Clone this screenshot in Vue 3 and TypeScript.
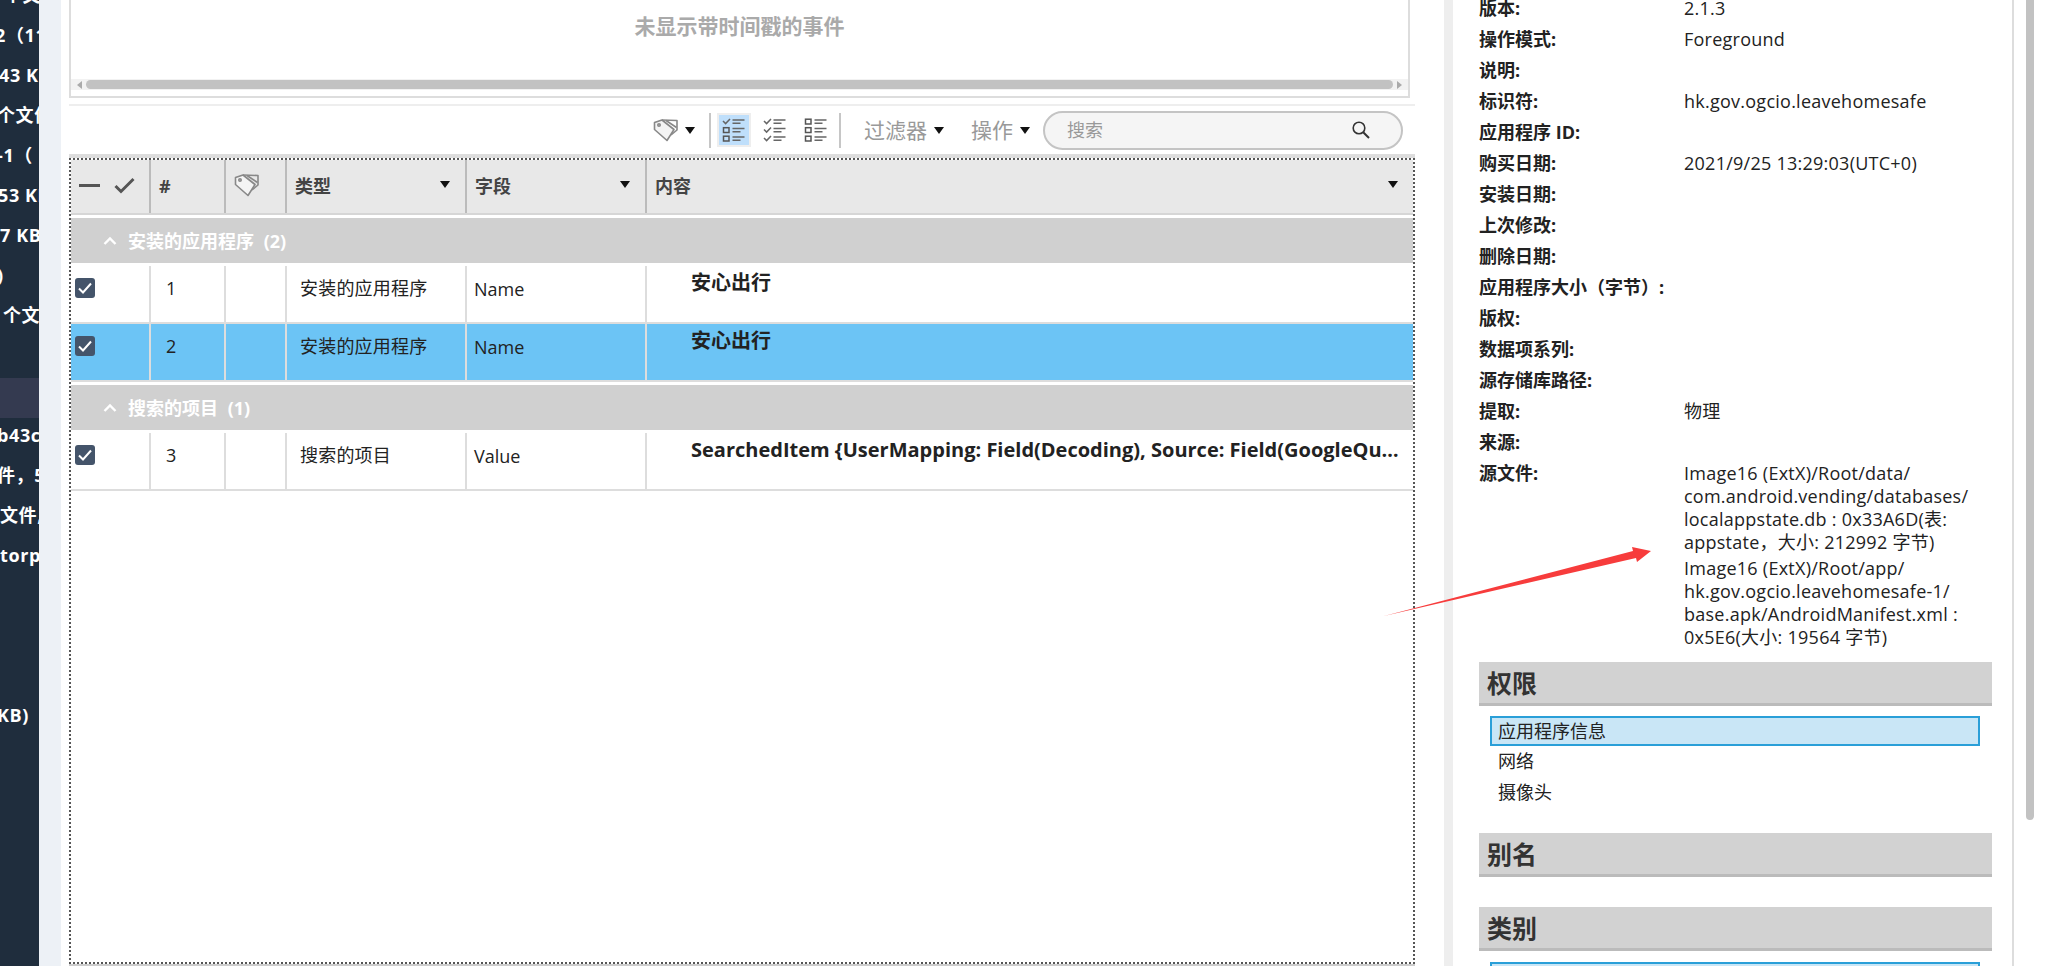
<script setup lang="ts">
type NavItem = { text: string; x: number; active?: boolean }
type GridRow = { id: number; type: string; field: string; content: string; selected?: boolean }
type Group = { title: string; rows: GridRow[] }

const navItems: NavItem[] = [
  { text: '个文件', x: 4 },
  { text: '2（11', x: -5 },
  { text: '43 KB', x: -1 },
  { text: '个文件', x: -3 },
  { text: '-1（', x: -3 },
  { text: '53 KB', x: -2 },
  { text: '7 KB', x: 0 },
  { text: ')', x: -3 },
  { text: '个文', x: 3 },
  { text: '', x: 0 },
  { text: '', x: 0, active: true },
  { text: 'b43c', x: -3 },
  { text: '件，5', x: -3 },
  { text: '文件,', x: 0 },
  { text: 'torp', x: 0 },
  { text: '', x: 0 },
  { text: '', x: 0 },
  { text: '', x: 0 },
  { text: 'KB)', x: -3 }
]

const groups: Group[] = [
  {
    title: '安装的应用程序 (2)',
    rows: [
      { id: 1, type: '安装的应用程序', field: 'Name', content: '安心出行' },
      { id: 2, type: '安装的应用程序', field: 'Name', content: '安心出行', selected: true }
    ]
  },
  {
    title: '搜索的项目 (1)',
    rows: [
      {
        id: 3,
        type: '搜索的项目',
        field: 'Value',
        content: 'SearchedItem {UserMapping: Field(Decoding), Source: Field(GoogleQuery), Value: Field(leavehomesafe)}'
      }
    ]
  }
]

const viewModes = [
  { marks: ['check', 'box', 'box'], active: true },
  { marks: ['check', 'check', 'check'], active: false },
  { marks: ['box', 'box', 'box'], active: false }
]

const props = [
  { label: '版本:', value: '2.1.3' },
  { label: '操作模式:', value: 'Foreground' },
  { label: '说明:', value: '' },
  { label: '标识符:', value: 'hk.gov.ogcio.leavehomesafe' },
  { label: '应用程序 ID:', value: '' },
  { label: '购买日期:', value: '2021/9/25 13:29:03(UTC+0)' },
  { label: '安装日期:', value: '' },
  { label: '上次修改:', value: '' },
  { label: '删除日期:', value: '' },
  { label: '应用程序大小（字节）:', value: '' },
  { label: '版权:', value: '' },
  { label: '数据项系列:', value: '' },
  { label: '源存储库路径:', value: '' },
  { label: '提取:', value: '物理' },
  { label: '来源:', value: '' }
]

const sources = [
  ['Image16 (ExtX)/Root/data/', 'com.android.vending/databases/', 'localappstate.db : 0x33A6D(表:', 'appstate，大小: 212992 字节)'],
  ['Image16 (ExtX)/Root/app/', 'hk.gov.ogcio.leavehomesafe-1/', 'base.apk/AndroidManifest.xml :', '0x5E6(大小: 19564 字节)']
]

const permissions = ['应用程序信息', '网络', '摄像头']
</script>

<template>
  <div class="page">
    <nav class="nav">
      <div v-for="(item, i) in navItems" :key="i" class="nav-item" :class="{ active: item.active }">
        <span :style="{ marginLeft: item.x + 'px' }">{{ item.text }}</span>
      </div>
    </nav>
    <div class="gutter"></div>

    <main class="main">
      <section class="timeline">
        <div class="timeline-msg">未显示带时间戳的事件</div>
        <div class="hscroll">
          <i class="tri-left"></i>
          <div class="hscroll-thumb"></div>
          <i class="tri-right"></i>
        </div>
      </section>

      <div class="toolbar">
        <svg class="tag-icon" width="27" height="25" viewBox="0 0 27 25">
          <use href="#tag-shape" />
        </svg>
        <i class="caret tag-caret"></i>
        <span class="tool-sep first-sep"></span>
        <button
          v-for="(mode, i) in viewModes"
          :key="i"
          class="view-btn"
          :class="{ on: mode.active }"
        >
          <svg width="24" height="24" viewBox="0 0 24 24">
            <g v-for="(mark, j) in mode.marks" :key="j" :transform="`translate(0 ${j * 8.5})`">
              <path v-if="mark === 'check'" d="M1 3l2.6 2.6L8 1" fill="none" stroke="#666" stroke-width="1.5" />
              <rect v-else x="1.5" y="1.2" width="5.5" height="4.8" fill="none" stroke="#555" stroke-width="1.5" />
              <path d="M10.5 2h12M10.5 5.2h8" fill="none" stroke="#666" stroke-width="1.4" />
            </g>
          </svg>
        </button>
        <span class="tool-sep second-sep"></span>
        <span class="tool-menu filter">过滤器<i class="caret"></i></span>
        <span class="tool-menu">操作<i class="caret"></i></span>
        <div class="search">
          <span>搜索</span>
          <svg width="20" height="20" viewBox="0 0 20 20">
            <circle cx="8" cy="8" r="5.8" fill="none" stroke="#333" stroke-width="1.6" />
            <path d="M12.2 12.2L18 18" stroke="#333" stroke-width="2" />
          </svg>
        </div>
      </div>

      <section class="grid">
        <div class="cols head">
          <div class="cell check-head">
            <span class="dash"></span>
            <svg width="21" height="17" viewBox="0 0 21 17">
              <path d="M1.5 9l5.5 5.5L19.5 2" fill="none" stroke="#555" stroke-width="3" />
            </svg>
          </div>
          <div class="cell hash">#</div>
          <div class="cell tag-head">
            <svg width="27" height="25" viewBox="0 0 27 25">
              <use href="#tag-shape" />
            </svg>
          </div>
          <div class="cell title">类型<i class="caret"></i></div>
          <div class="cell title">字段<i class="caret"></i></div>
          <div class="cell title last">内容<i class="caret"></i></div>
        </div>

        <template v-for="group in groups" :key="group.title">
          <div class="group">
            <svg width="14" height="9" viewBox="0 0 14 9">
              <path d="M1.5 8L7 2.5L12.5 8" fill="none" stroke="#fff" stroke-width="2.4" />
            </svg>
            <span>{{ group.title }}</span>
          </div>
          <div
            v-for="(row, i) in group.rows"
            :key="row.id"
            class="cols row"
            :class="{ selected: row.selected, lead: i === 0 }"
          >
            <div class="cell c-check">
              <span class="checkbox">
                <svg width="20" height="20" viewBox="0 0 20 20">
                  <path d="M4 10.5l4 4 8-9" fill="none" stroke="#fff" stroke-width="2" />
                </svg>
              </span>
            </div>
            <div class="cell c-num">{{ row.id }}</div>
            <div class="cell"></div>
            <div class="cell c-type">{{ row.type }}</div>
            <div class="cell c-field">{{ row.field }}</div>
            <div class="cell c-content last">{{ row.content }}</div>
          </div>
        </template>
      </section>
    </main>

    <div class="strip"></div>

    <aside class="details">
      <div v-for="p in props" :key="p.label" class="prop">
        <b>{{ p.label }}</b>
        <span class="value">{{ p.value }}</span>
      </div>
      <div class="prop source">
        <b>源文件:</b>
        <div class="value">
          <div v-for="(lines, i) in sources" :key="i" class="source-block">
            <div v-for="line in lines" :key="line">{{ line }}</div>
          </div>
        </div>
      </div>

      <h2 class="section">权限</h2>
      <ul class="list">
        <li v-for="(perm, i) in permissions" :key="perm" :class="{ picked: i === 0 }">{{ perm }}</li>
      </ul>
      <h2 class="section alias">别名</h2>
      <h2 class="section category">类别</h2>
      <ul class="list category-list">
        <li class="picked"></li>
      </ul>
    </aside>

    <div class="vscroll"><div class="vscroll-thumb"></div></div>

    <!-- red annotation arrow drawn over the screenshot -->
    <svg class="annotation" width="2051" height="966" viewBox="0 0 2051 966">
      <defs>
        <g id="tag-shape" fill="none" stroke="#888" stroke-width="1.6" stroke-linejoin="round">
          <path d="M1.5 4.5L9 2L21 11.5L14 22.5L1.5 11.5Z" fill="#f4f4f4" />
          <path d="M9 2L24 2.5L24 12L18 17" />
          <path d="M13 2.5L23.5 9.5" />
          <circle cx="6" cy="7" r="1.2" />
        </g>
      </defs>
      <path d="M1384 616L1633 551L1632 547L1651 551L1637 562L1636 558Z" fill="#f73c3c" />
    </svg>
  </div>
</template>

<style scoped>
.page {
  position: relative;
  display: flex;
  width: 2051px;
  height: 966px;
  overflow: hidden;
  background: #fff;
  color: #222;
  font-family: "Open Sans", "Noto Sans CJK SC", sans-serif;
  font-size: 18px;
  line-height: 24px;
}
.nav {
  flex: none;
  width: 39px;
  margin-top: -22px;
  overflow: hidden;
  background: #1f2d3d;
  color: #fff;
  font-weight: 700;
  letter-spacing: 0.6px;
}
.nav-item {
  display: flex;
  height: 40px;
  padding-bottom: 6px;
  box-sizing: border-box;
  align-items: center;
  white-space: nowrap;
}
.nav-item.active {
  background: #343a50;
}
.gutter {
  flex: none;
  width: 22px;
  background: #edf1f6;
}
.main {
  flex: none;
  display: flex;
  flex-direction: column;
  width: 1383px;
  padding: 0 29px 0 8px;
  box-sizing: border-box;
}
.timeline {
  display: flex;
  flex-direction: column;
  justify-content: space-between;
  height: 98px;
  margin-right: 5px;
  border: 2px solid #ddd;
  border-top: 0;
  box-sizing: border-box;
}
.timeline-msg {
  padding-top: 12px;
  text-align: center;
  color: #aaa;
  font-size: 21px;
  font-weight: 700;
  line-height: 28px;
}
.hscroll {
  display: flex;
  align-items: center;
  gap: 4px;
  height: 11px;
  margin-bottom: 6px;
  padding: 0 6px;
  background: #f2f2f2;
}
.hscroll-thumb {
  flex: 1;
  height: 9px;
  border-radius: 5px;
  background: #c2c2c2;
}
.tri-left,
.tri-right {
  width: 0;
  height: 0;
  border-top: 4px solid transparent;
  border-bottom: 4px solid transparent;
}
.tri-left {
  border-right: 5px solid #aaa;
}
.tri-right {
  border-left: 5px solid #aaa;
}
.toolbar {
  display: flex;
  flex: none;
  align-items: center;
  justify-content: flex-end;
  height: 50px;
  margin-top: 6px;
  padding-right: 12px;
  border-top: 2px solid #eee;
  box-sizing: border-box;
}
.caret {
  display: inline-block;
  width: 0;
  height: 0;
  border-left: 5px solid transparent;
  border-right: 5px solid transparent;
  border-top: 7px solid #111;
}
.tag-caret {
  margin-left: 5px;
}
.tool-sep {
  width: 2px;
  height: 35px;
  background: #c6c6c6;
}
.first-sep {
  margin: 0 6px 0 14px;
}
.second-sep {
  margin: 0 23px 0 -1px;
}
.view-btn {
  display: flex;
  align-items: center;
  justify-content: center;
  width: 34px;
  height: 34px;
  margin-right: 7px;
  padding: 0;
  border: 2px solid transparent;
  background: none;
}
.view-btn.on {
  border-color: #eee;
  background: #bfdffb;
}
.tool-menu {
  display: flex;
  align-items: center;
  gap: 7px;
  margin-right: 13px;
  color: #999;
  font-size: 21px;
}
.tool-menu.filter {
  margin-right: 27px;
}
.search {
  display: flex;
  align-items: center;
  justify-content: space-between;
  width: 360px;
  height: 39px;
  padding: 0 30px 0 22px;
  border: 2px solid #c4c4c4;
  border-radius: 20px;
  box-sizing: border-box;
  background: #f5f5f5;
  color: #999;
}
.grid {
  flex: 1;
  margin: 4px 0 2px;
  box-shadow: 0 -4px 0 #ddd, 0 2px 0 #ccc;
  border: 2px dotted #555;
  background: #fff;
}
.cols {
  display: grid;
  grid-template-columns: 80px 75px 61px 180px 180px 1fr;
}
.cell {
  min-width: 0;
  border-right: 2px solid #ddd;
  box-sizing: border-box;
}
.cell.last {
  border-right: 0;
}
.head {
  height: 55px;
  margin-bottom: 3px;
  border-bottom: 2px solid #d6d6d6;
  box-sizing: border-box;
  background: #e8e8e8;
  color: #444;
  font-weight: 700;
}
.head .cell {
  display: flex;
  align-items: center;
  padding-bottom: 2px;
  border-right-color: #bbb;
}
.check-head {
  gap: 14px;
  padding-left: 8px;
}
.dash {
  width: 21px;
  height: 3px;
  background: #555;
}
.hash {
  padding-left: 8px;
}
.tag-head {
  padding-left: 8px;
}
.title {
  justify-content: space-between;
  padding: 0 15px 0 8px;
}
.title .caret {
  margin-top: -2px;
}
.group {
  display: flex;
  align-items: center;
  gap: 11px;
  height: 45px;
  padding-left: 32px;
  background: #d0d0d0;
  color: #fff;
  font-weight: 700;
  word-spacing: 5px;
}
.row {
  border-bottom: 2px solid #ddd;
}
.row.lead {
  padding-top: 3px;
}
.row .cell {
  height: 56px;
}
.row.selected {
  margin-bottom: 3px;
  background: #6cc4f5;
}
.c-check {
  padding: 12px 0 0 4px;
}
.checkbox {
  display: block;
  width: 20px;
  height: 20px;
  border-radius: 3px;
  background: #44546a;
}
.checkbox svg {
  display: block;
}
.c-num {
  padding: 10px 0 0 15px;
}
.c-type {
  padding: 10px 0 0 13px;
  letter-spacing: 0.2px;
}
.c-field {
  padding: 11px 0 0 7px;
}
.c-content {
  padding: 5px 8px 0 44px;
  overflow: hidden;
  font-size: 20px;
  font-weight: 700;
  white-space: nowrap;
  text-overflow: ellipsis;
}
.strip {
  flex: none;
  width: 9px;
  background: #eee;
}
.details {
  flex: none;
  width: 561px;
  margin-top: -7px;
  padding: 0 20px 0 26px;
  border-right: 2px solid #ddd;
  box-sizing: border-box;
}
.prop {
  display: grid;
  grid-template-columns: 205px 1fr;
  min-height: 31px;
  line-height: 31px;
  white-space: nowrap;
}
.value {
  letter-spacing: 0.25px;
}
.source-block {
  margin-bottom: 3px;
  line-height: 23px;
}
.source > div {
  padding-top: 4px;
}
.section {
  height: 44px;
  margin: 0;
  padding-left: 8px;
  border-bottom: 3px solid #bbb;
  box-sizing: border-box;
  background: #d2d2d2;
  color: #333;
  font-size: 25px;
  font-weight: 700;
  line-height: 42px;
}
.prop.source {
  margin-bottom: 10px;
}
.list {
  margin: 10px 0 0;
  padding: 0 12px 0 11px;
  list-style: none;
}
.list li {
  height: 31px;
  padding-left: 8px;
  line-height: 30px;
  box-sizing: border-box;
}
.list li.picked {
  height: 30px;
  padding-left: 6px;
  line-height: 26px;
  border: 2px solid #2a9fd8;
  background: #c9e6f6;
}
.alias {
  margin-top: 25px;
}
.category {
  margin-top: 30px;
}
.category-list {
  margin-top: 11px;
}
.vscroll {
  flex: none;
  width: 8px;
  margin-left: 12px;
}
.vscroll-thumb {
  height: 820px;
  border-radius: 0 0 5px 5px;
  background: #c2c2c2;
}
.annotation {
  position: absolute;
  top: 0;
  left: 0;
  pointer-events: none;
}
</style>
